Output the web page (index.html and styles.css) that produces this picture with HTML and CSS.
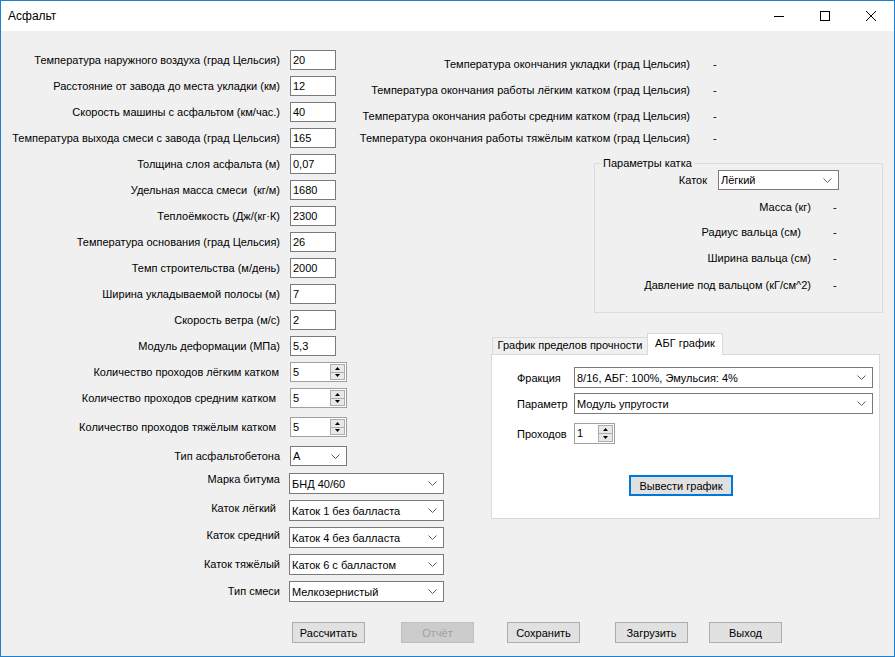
FILE: index.html
```html
<!DOCTYPE html>
<html lang="ru">
<head>
<meta charset="utf-8">
<title>Асфальт</title>
<link rel="stylesheet" href="styles.css">
</head>
<body>
<div class="window">
  <div class="titlebar">
    <span class="title">Асфальт</span>
    <div class="caption">
      <span class="cap"><svg width="10" height="10" viewBox="0 0 10 10"><line x1="0" y1="5.5" x2="10" y2="5.5" stroke="#000" stroke-width="1"/></svg></span>
      <span class="cap"><svg width="10" height="10" viewBox="0 0 10 10"><rect x="0.5" y="0.5" width="9" height="9" fill="none" stroke="#000" stroke-width="1"/></svg></span>
      <span class="cap"><svg width="10" height="10" viewBox="0 0 10 10"><path d="M0 0 L10 10 M10 0 L0 10" stroke="#000" stroke-width="1"/></svg></span>
    </div>
  </div>

  <div class="main">
    <div class="left">
      <div class="row h26"><span class="lbl">Температура наружного воздуха (град Цельсия)</span><span class="textbox">20</span></div>
      <div class="row h26"><span class="lbl">Расстояние от завода до места укладки (км)</span><span class="textbox">12</span></div>
      <div class="row h26"><span class="lbl">Скорость машины с асфальтом (км/час.)</span><span class="textbox">40</span></div>
      <div class="row h26"><span class="lbl">Температура выхода смеси с завода (град Цельсия)</span><span class="textbox">165</span></div>
      <div class="row h26"><span class="lbl">Толщина слоя асфальта (м)</span><span class="textbox">0,07</span></div>
      <div class="row h26"><span class="lbl">Удельная масса смеси&nbsp; (кг/м)</span><span class="textbox">1680</span></div>
      <div class="row h26"><span class="lbl">Теплоёмкость (Дж/(кг·К)</span><span class="textbox">2300</span></div>
      <div class="row h26"><span class="lbl">Температура основания (град Цельсия)</span><span class="textbox">26</span></div>
      <div class="row h26"><span class="lbl">Темп строительства (м/день)</span><span class="textbox">2000</span></div>
      <div class="row h26"><span class="lbl">Ширина укладываемой полосы (м)</span><span class="textbox">7</span></div>
      <div class="row h26"><span class="lbl">Скорость ветра (м/с)</span><span class="textbox">2</span></div>
      <div class="row h26"><span class="lbl">Модуль деформации (МПа)</span><span class="textbox">5,3</span></div>

      <div class="row h26"><span class="lbl in1">Количество проходов лёгким катком</span>
        <span class="spin"><span class="spin-val">5</span><span class="spin-btns"><span class="sb"><svg width="5" height="3" viewBox="0 0 5 3"><path d="M2.5 0 L5 3 L0 3 Z" fill="#000"/></svg></span><span class="sb"><svg width="5" height="3" viewBox="0 0 5 3"><path d="M0 0 L5 0 L2.5 3 Z" fill="#000"/></svg></span></span></span></div>
      <div class="row h29"><span class="lbl in4">Количество проходов средним катком</span>
        <span class="spin"><span class="spin-val">5</span><span class="spin-btns"><span class="sb"><svg width="5" height="3" viewBox="0 0 5 3"><path d="M2.5 0 L5 3 L0 3 Z" fill="#000"/></svg></span><span class="sb"><svg width="5" height="3" viewBox="0 0 5 3"><path d="M0 0 L5 0 L2.5 3 Z" fill="#000"/></svg></span></span></span></div>
      <div class="row h29"><span class="lbl in4">Количество проходов тяжёлым катком</span>
        <span class="spin"><span class="spin-val">5</span><span class="spin-btns"><span class="sb"><svg width="5" height="3" viewBox="0 0 5 3"><path d="M2.5 0 L5 3 L0 3 Z" fill="#000"/></svg></span><span class="sb"><svg width="5" height="3" viewBox="0 0 5 3"><path d="M0 0 L5 0 L2.5 3 Z" fill="#000"/></svg></span></span></span></div>

      <div class="row h27"><span class="lbl">Тип асфальтобетона</span><span class="combo small"><span class="cv">А</span><svg class="chev" width="9" height="5" viewBox="0 0 9 5"><polyline points="0.5,0.5 4.5,4.5 8.5,0.5" fill="none" stroke="#606060"/></svg></span></div>
      <div class="row h27"><span class="lbl up">Марка битума</span><span class="combo wide"><span class="cv">БНД 40/60</span><svg class="chev" width="9" height="5" viewBox="0 0 9 5"><polyline points="0.5,0.5 4.5,4.5 8.5,0.5" fill="none" stroke="#606060"/></svg></span></div>
      <div class="row h27"><span class="lbl in4 up2">Каток лёгкий</span><span class="combo wide"><span class="cv">Каток 1 без балласта</span><svg class="chev" width="9" height="5" viewBox="0 0 9 5"><polyline points="0.5,0.5 4.5,4.5 8.5,0.5" fill="none" stroke="#606060"/></svg></span></div>
      <div class="row h27"><span class="lbl up2">Каток средний</span><span class="combo wide"><span class="cv">Каток 4 без балласта</span><svg class="chev" width="9" height="5" viewBox="0 0 9 5"><polyline points="0.5,0.5 4.5,4.5 8.5,0.5" fill="none" stroke="#606060"/></svg></span></div>
      <div class="row h27"><span class="lbl">Каток тяжёлый</span><span class="combo wide"><span class="cv">Каток 6 с балластом</span><svg class="chev" width="9" height="5" viewBox="0 0 9 5"><polyline points="0.5,0.5 4.5,4.5 8.5,0.5" fill="none" stroke="#606060"/></svg></span></div>
      <div class="row h27"><span class="lbl">Тип смеси</span><span class="combo wide"><span class="cv">Мелкозернистый</span><svg class="chev" width="9" height="5" viewBox="0 0 9 5"><polyline points="0.5,0.5 4.5,4.5 8.5,0.5" fill="none" stroke="#606060"/></svg></span></div>
    </div>

    <div class="right">
      <div class="results">
        <div class="res"><span class="rl">Температура окончания укладки (град Цельсия)</span><span class="rv">-</span></div>
        <div class="res g10"><span class="rl">Температура окончания работы лёгким катком (град Цельсия)</span><span class="rv">-</span></div>
        <div class="res g10"><span class="rl">Температура окончания работы средним катком (град Цельсия)</span><span class="rv">-</span></div>
        <div class="res g6"><span class="rl">Температура окончания работы тяжёлым катком (град Цельсия)</span><span class="rv">-</span></div>
      </div>

      <fieldset class="group">
        <legend>Параметры катка</legend>
        <div class="kat"><span class="kl">Каток</span><span class="combo kc"><span class="cv">Лёгкий</span><svg class="chev" width="9" height="5" viewBox="0 0 9 5"><polyline points="0.5,0.5 4.5,4.5 8.5,0.5" fill="none" stroke="#606060"/></svg></span></div>
        <div class="prm m9"><span class="pl">Масса (кг)</span><span class="pv">-</span></div>
        <div class="prm m9"><span class="pl in10">Радиус вальца (см)</span><span class="pv">-</span></div>
        <div class="prm m10"><span class="pl">Ширина вальца (см)</span><span class="pv">-</span></div>
        <div class="prm m11"><span class="pl">Давление под вальцом (кГ/см^2)</span><span class="pv">-</span></div>
      </fieldset>

      <div class="tabs">
        <div class="tabstrip">
          <span class="tab">График пределов прочности</span>
          <span class="tab active">АБГ график</span>
        </div>
        <div class="panel">
          <div class="prow"><span class="pll">Фракция</span><span class="combo pc"><span class="cv">8/16, АБГ: 100%, Эмульсия: 4%</span><svg class="chev" width="9" height="5" viewBox="0 0 9 5"><polyline points="0.5,0.5 4.5,4.5 8.5,0.5" fill="none" stroke="#606060"/></svg></span></div>
          <div class="prow m5"><span class="pll">Параметр</span><span class="combo pc"><span class="cv">Модуль упругости</span><svg class="chev" width="9" height="5" viewBox="0 0 9 5"><polyline points="0.5,0.5 4.5,4.5 8.5,0.5" fill="none" stroke="#606060"/></svg></span></div>
          <div class="prow m9"><span class="pll">Проходов</span>
            <span class="spin small-spin"><span class="spin-val">1</span><span class="spin-btns"><span class="sb"><svg width="5" height="3" viewBox="0 0 5 3"><path d="M2.5 0 L5 3 L0 3 Z" fill="#000"/></svg></span><span class="sb"><svg width="5" height="3" viewBox="0 0 5 3"><path d="M0 0 L5 0 L2.5 3 Z" fill="#000"/></svg></span></span></span></div>
          <div class="brow"><span class="btn focus">Вывести график</span></div>
        </div>
      </div>
    </div>
  </div>

  <div class="footer">
    <span class="btn fb">Рассчитать</span>
    <span class="btn fb disabled b2">Отчёт</span>
    <span class="btn fb b3">Сохранить</span>
    <span class="btn fb b4">Загрузить</span>
    <span class="btn fb b5">Выход</span>
  </div>
</div>
</body>
</html>
```

FILE: styles.css
```css
* { box-sizing: border-box; }
html, body { margin: 0; padding: 0; }
body {
  font-family: "Liberation Sans", Arial, sans-serif;
  font-size: 11px;
  color: #000;
  background: #fff;
}
.window {
  width: 895px;
  height: 657px;
  border: 1px solid #1b7fd3;
  background: #f0f0f0;
  display: flex;
  flex-direction: column;
  overflow: hidden;
}
.titlebar {
  flex: none;
  height: 30px;
  background: #fff;
  display: flex;
  align-items: center;
}
.title { flex: 1; padding-left: 7px; font-size: 12px; }
.caption { display: flex; height: 30px; }
.cap {
  width: 46px;
  height: 30px;
  display: flex;
  align-items: center;
  justify-content: center;
}
.main { flex: none; height: 591px; display: flex; }

/* left form */
.left {
  flex: none;
  width: 355px;
  padding-top: 19px;
  display: flex;
  flex-direction: column;
  position: relative;
  z-index: 1;
}
.row { display: flex; align-items: flex-start; flex: none; }
.row > * { flex: none; }
.h26 { height: 26px; }
.h27 { height: 27px; }
.h29 { height: 29px; }
.lbl {
  width: 279px;
  text-align: right;
  line-height: 20px;
  height: 20px;
  white-space: nowrap;
  margin-right: 10px;
}
.in1 { padding-right: 1px; }
.in4 { padding-right: 4px; }
.up { line-height: 12px; }
.up2 { line-height: 16px; }
.textbox {
  width: 46px;
  height: 20px;
  background: #fff;
  border: 1px solid #7a7a7a;
  padding-left: 2px;
  line-height: 18px;
}
.spin {
  width: 57px;
  height: 20px;
  background: #fff;
  border: 1px solid #a0a0a0;
  display: flex;
  padding: 1px 1px 1px 2px;
}
.spin-val { flex: 1; line-height: 16px; }
.spin-btns {
  width: 15px;
  display: flex;
  flex-direction: column;
}
.sb {
  flex: 1;
  background: #e8e8e8;
  border: 1px solid #adadad;
  display: flex;
  align-items: center;
  justify-content: center;
}
.sb + .sb { border-top: none; }
.combo {
  height: 21px;
  background: #fff;
  border: 1px solid #7a7a7a;
  display: flex;
  align-items: center;
  padding: 0 6px 0 2px;
}
.combo .cv { flex: 1; white-space: nowrap; overflow: hidden; }
.combo .chev { flex: none; }
.combo.small { width: 57px; height: 20px; }
.combo.wide { width: 155px; margin-left: -1px; }

/* right area */
.right {
  flex: 1;
  display: flex;
  flex-direction: column;
  padding-top: 25px;
}
.results { display: flex; flex-direction: column; }
.res { display: flex; height: 16px; line-height: 16px; }
.g10 { margin-top: 10px; }
.g6 { margin-top: 6px; }
.rl { width: 334px; text-align: right; white-space: nowrap; }
.rv { margin-left: 23px; }

.group {
  margin: 11px 0 0 238px;
  padding: 0;
  width: 289px;
  height: 156px;
  border: 1px solid #dcdcdc;
  min-width: 0;
}
.group legend {
  margin-left: 6px;
  padding: 0 2px;
  line-height: 13px;
  font-size: 11px;
}
.kat { display: flex; align-items: center; height: 20px; }
.kl { width: 112px; text-align: right; margin-right: 11px; }
.combo.kc { width: 121px; height: 20px; }
.prm { display: flex; height: 16px; line-height: 16px; }
.m9 { margin-top: 9px; }
.m10 { margin-top: 10px; }
.m11 { margin-top: 11px; }
.m5 { margin-top: 5px; }
.pl { width: 216px; text-align: right; white-space: nowrap; }
.in10 { padding-right: 10px; }
.pv { margin-left: 22px; }

.tabs { margin: 20px 0 0 135px; width: 389px; }
.tabstrip { display: flex; align-items: flex-end; height: 21px; }
.tab {
  height: 17px;
  line-height: 15px;
  background: #f0f0f0;
  border: 1px solid #d9d9d9;
  border-bottom: none;
  width: 156px;
  text-align: center;
  margin-left: 1px;
  white-space: nowrap;
}
.tab.active {
  width: 76px;
  height: 22px;
  line-height: 18px;
  background: #fff;
  margin-left: -1px;
  margin-bottom: -1px;
  position: relative;
  z-index: 1;
}
.panel {
  height: 165px;
  background: #fff;
  border: 1px solid #d9d9d9;
  padding-top: 12px;
}
.prow { display: flex; align-items: center; }
.pll { width: 82px; padding-left: 25px; white-space: nowrap; }
.combo.pc { width: 299px; }
.spin.small-spin { width: 41px; height: 21px; }
.brow { margin-top: 31px; padding-left: 137px; }

.btn {
  display: inline-flex;
  align-items: center;
  justify-content: center;
  height: 21px;
  background: #e1e1e1;
  border: 1px solid #adadad;
  white-space: nowrap;
}
.btn.focus {
  width: 104px;
  border: 2px solid #0078d7;
}
.footer {
  flex: none;
  display: flex;
  padding-left: 291px;
}
.fb { width: 73px; }
.fb.disabled { background: #cccccc; border-color: #bfbfbf; color: #a0a0a0; }
.b2 { margin-left: 36px; }
.b3 { margin-left: 33px; }
.b4 { margin-left: 35px; }
.b5 { margin-left: 21px; }
```
